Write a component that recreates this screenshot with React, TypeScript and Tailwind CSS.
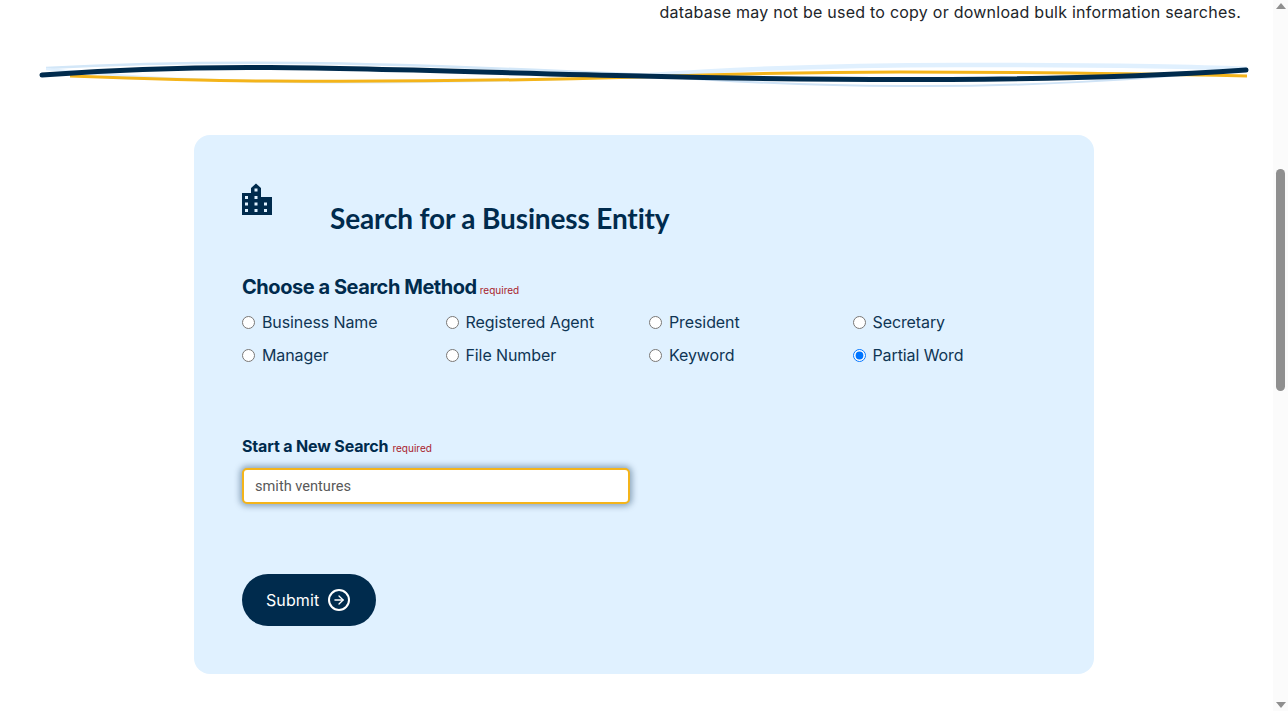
import { ArrowRight } from 'lucide-react';

const methods = [
  'Business Name',
  'Registered Agent',
  'President',
  'Secretary',
  'Manager',
  'File Number',
  'Keyword',
  'Partial Word',
];

function Divider() {
  return (
    <svg width="1273" height="50" viewBox="0 0 1273 50" fill="none" className="block">
      {/* light blue brush */}
      <path d="M46 18 C 120 14, 200 12, 300 13 C 420 14, 540 20, 650 25" stroke="#d3e7f8" strokeWidth="2.5" />
      <path d="M650 25 C 750 18, 870 15, 960 15 C 1080 15, 1180 16, 1247 19" stroke="#e0f0fe" strokeWidth="4.5" />
      <path d="M46 19 C 120 27, 200 31, 300 32 C 420 33, 540 30, 650 26" stroke="#e0f0fe" strokeWidth="2.5" />
      <path d="M650 26 C 720 31, 800 36, 900 36 C 1020 37, 1150 30, 1247 18" stroke="#cfe3f6" strokeWidth="2" />
      {/* yellow */}
      <path d="M70 26 C 150 29, 210 31, 270 31 C 400 32, 530 30, 640 27 C 730 24, 820 22, 900 22 C 1020 22, 1150 24, 1247 26" stroke="#f4b41a" strokeWidth="3" />
      {/* navy */}
      <path d="M42 25 C 120 19, 200 17, 270 17.5 C 400 18.5, 530 24, 640 26 C 760 29, 860 30, 950 29.5 C 1060 29, 1170 25, 1246 20" stroke="#002b4d" strokeWidth="5" strokeLinecap="round" />
    </svg>
  );
}

function Required() {
  return <span className="text-[10px] font-normal text-[#a8232d]">required</span>;
}

export default function App() {
  return (
    <div className="flex h-[711px] overflow-hidden bg-white font-['Inter','Liberation_Sans',sans-serif] text-[#002b4d]">
      <main className="flex-1">
        <p className="mr-[32px] pt-[2px] text-right text-[16px] leading-[20px] tracking-[0.24px] text-[#212529]">
          database may not be used to copy or download bulk information searches.
        </p>
        <div className="mt-[28px]">
          <Divider />
        </div>

        <section className="mt-[35px] ml-[194px] flex h-[539px] w-[900px] flex-col rounded-[16px] bg-[#e0f1ff] px-[48px] pt-[48px]">
          <div className="flex items-start">
            <svg width="30" height="32" viewBox="0 0 30 32" className="shrink-0">
              <path
                fillRule="evenodd"
                fill="#002b4d"
                d="M0 10h9V5l5-4.5L19 5v9h11v18H0z M12.5 5.5v3h3v-3z M3 13v3h3v-3z M12.5 13v3h3v-3z M3 19.5v3h3v-3z M12.5 19.5v3h3v-3z M22 19.5v3h3v-3z M3 26v3h3v-3z M12.5 26v3h3v-3z M22 26v3h3v-3z"
              />
            </svg>
            <h1 className="mt-[17px] ml-[58px] font-['Lato','Liberation_Sans',sans-serif] text-[28px] leading-[36px] font-bold tracking-[-0.15px] text-[#002b4d]">
              Search for a Business Entity
            </h1>
          </div>

          <div className="mt-[37px] flex items-baseline gap-[3px]">
            <h2 className="text-[20px] leading-[28px] font-bold tracking-[-0.45px]">Choose a Search Method</h2>
            <Required />
          </div>

          <div className="mt-[4px] grid w-[814px] grid-cols-4">
            {methods.map(m => (
              <label key={m} className="flex h-[33px] items-center text-[16px] tracking-[-0.1px] text-[#0f3554]">
                <input
                  type="radio"
                  name="method"
                  defaultChecked={m === 'Partial Word'}
                  className="mt-[2px] mr-[7px] h-[13px] w-[13px] bg-white"
                />
                {m}
              </label>
            ))}
          </div>

          <div className="mt-[63px] flex items-baseline gap-[4px]">
            <label className="text-[16px] leading-[24px] font-bold tracking-[-0.15px]">Start a New Search</label>
            <Required />
          </div>

          <input
            type="text"
            defaultValue="smith ventures"
            className="mt-[10px] h-[36px] w-[388px] rounded-[5px] border-2 border-[#f4b41a] bg-white px-[11px] font-['Roboto','Liberation_Sans',sans-serif] text-[14.6px] text-[#595959] shadow-[0_0_6px_2px_rgba(0,43,77,0.4)] outline-none"
          />

          <button
            type="button"
            className="mt-[70px] flex h-[52px] w-[134px] items-center rounded-full bg-[#002b4d] pl-[24px] text-[16px] font-normal tracking-[0.1px] text-white"
          >
            Submit
            <span className="ml-[9px] flex h-[22px] w-[22px] items-center justify-center rounded-full border-2 border-white">
              <ArrowRight size={14} strokeWidth={2.25} />
            </span>
          </button>
        </section>
      </main>

      {/* scrollbar */}
      <div className="relative flex w-[15px] shrink-0 flex-col items-center justify-between bg-[#fbfbfb] py-[3px]">
        <div className="h-0 w-0 border-x-[5px] border-b-[6px] border-x-transparent border-b-[#8f8f8f]" />
        <div className="h-0 w-0 border-x-[5px] border-t-[6px] border-x-transparent border-t-[#8f8f8f]" />
        <div className="absolute top-[169px] left-[3px] h-[222px] w-[9px] rounded-[5px] bg-[#8f8f8f]" />
      </div>
    </div>
  );
}
